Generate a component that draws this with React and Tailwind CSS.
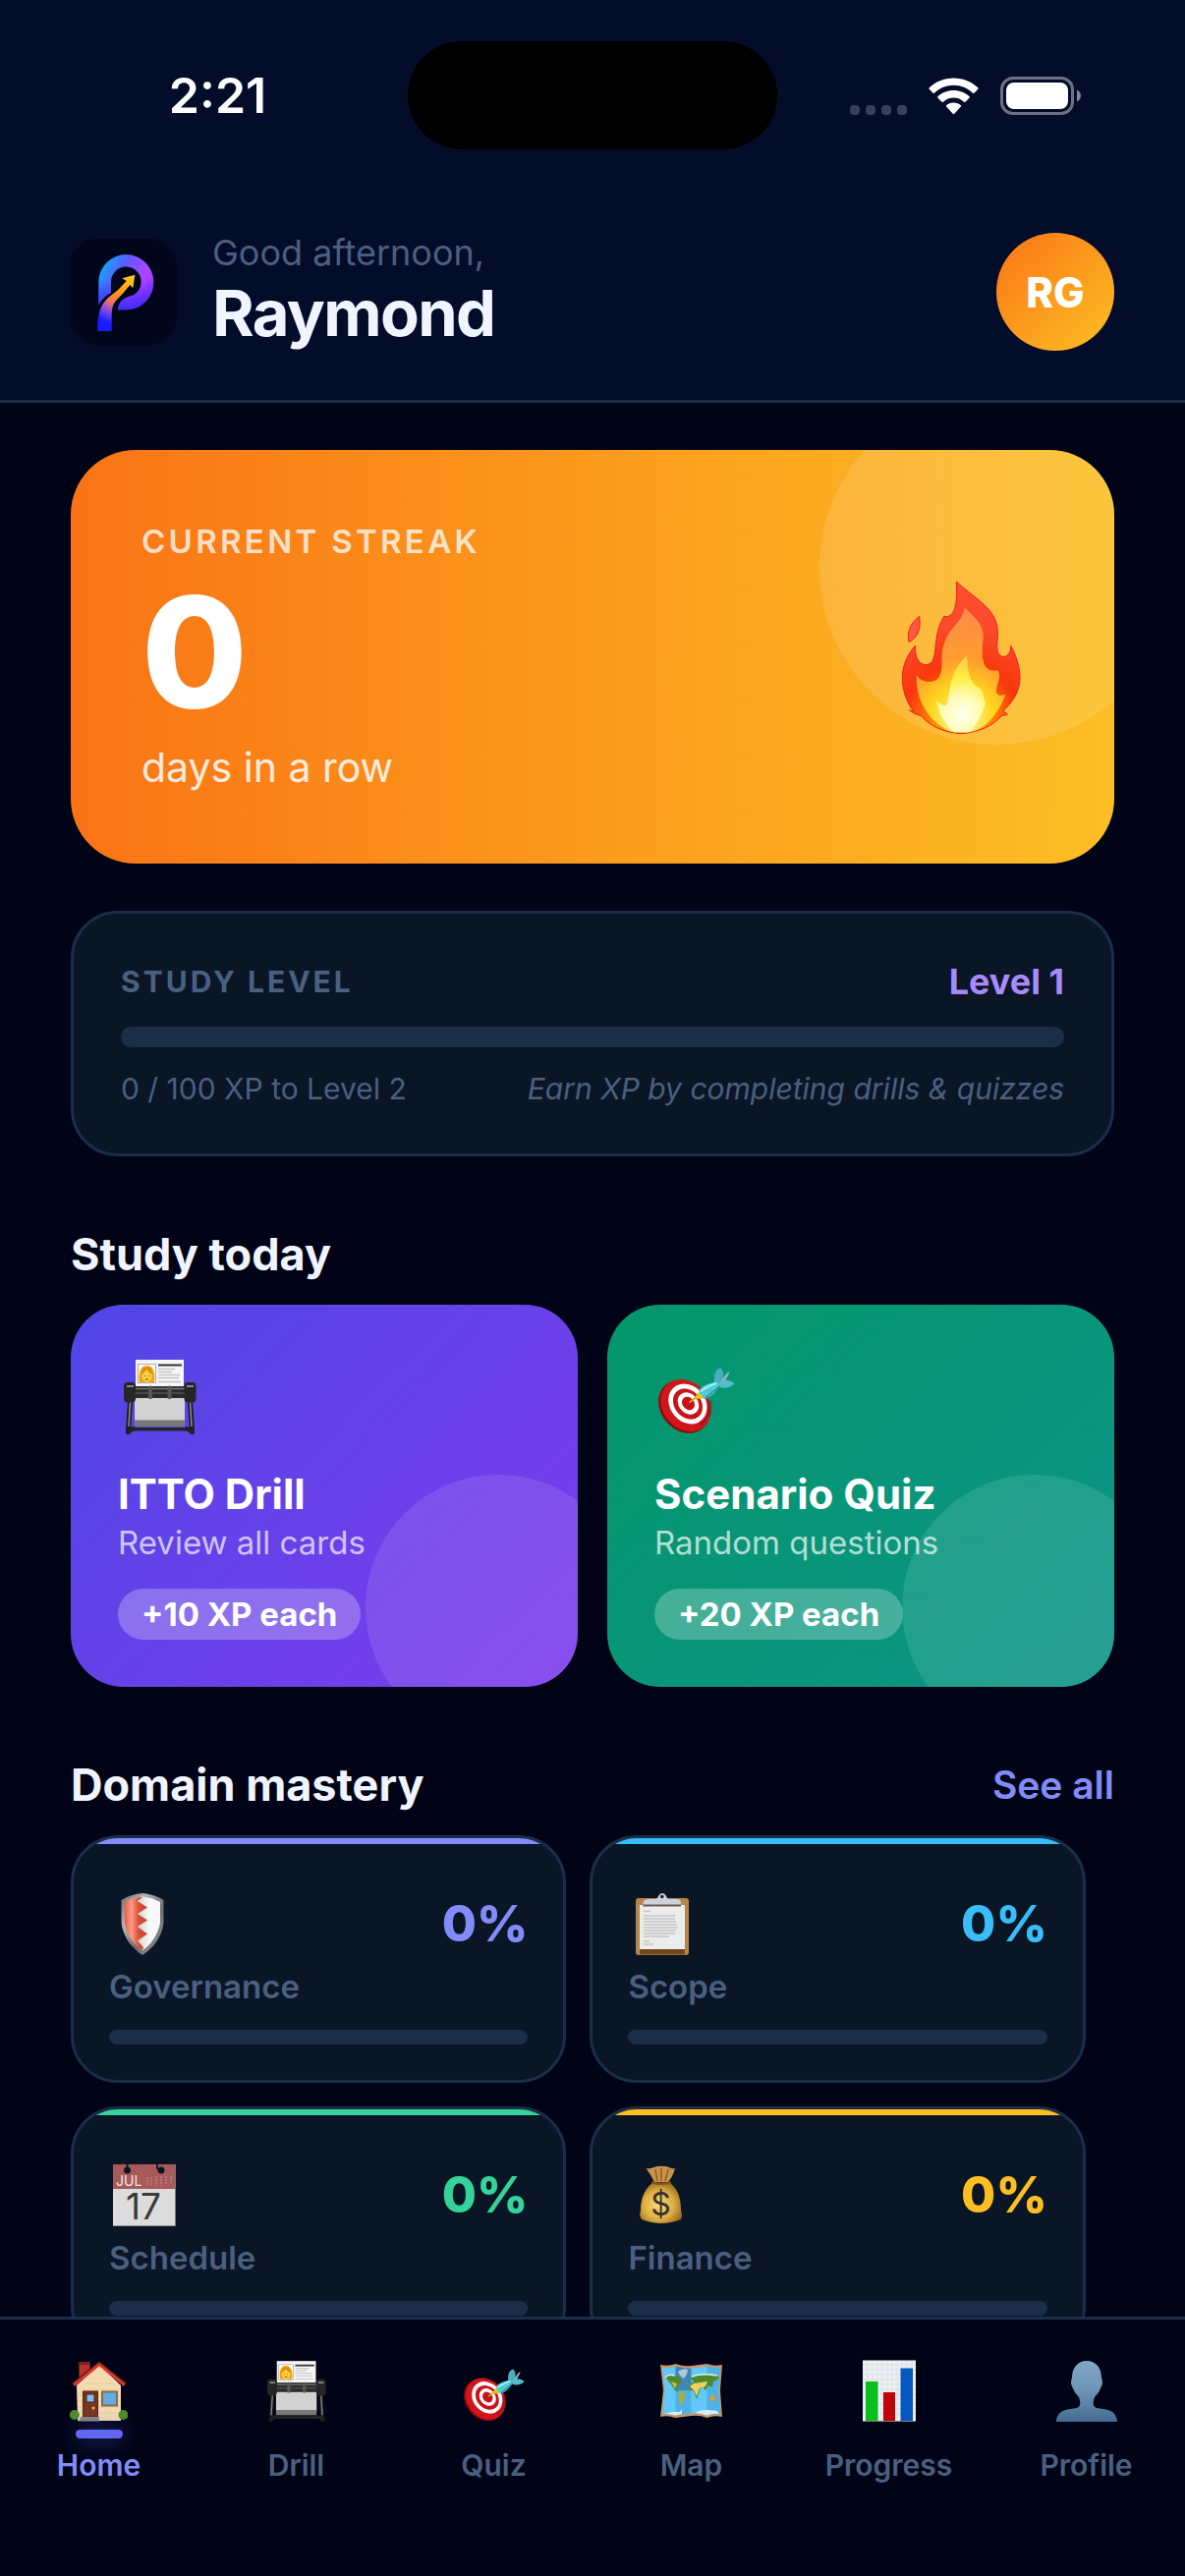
import React, { useState } from 'react';

const WifiIcon = () => (
    <svg width="51" height="38" viewBox="0 0 51 38" fill="#fff" aria-hidden="true">
        <path d="M25.500 .5C35.500 .5 44 4.300 50.300 10.300Q51 11 50.300 11.700L46.400 15.700Q45.800 16.300 45.100 15.700C39.800 10.700 33 7.800 25.500 7.800S11.200 10.700 5.900 15.700Q5.200 16.300 4.600 15.700L.7 11.700Q0 11 .7 10.300C7 4.300 15.500 .5 25.500 .5Z" />
        <path d="M25.500 13C32 13 37.500 15.400 41.600 19.200Q42.300 19.900 41.600 20.600L37.500 24.700Q36.800 25.300 36.100 24.700C33.200 22.200 29.600 20.600 25.500 20.600S17.800 22.200 14.900 24.700Q14.200 25.300 13.500 24.700L9.400 20.600Q8.700 19.900 9.400 19.200C13.500 15.400 19 13 25.500 13Z" />
        <path d="M25.500 25.500C28.400 25.500 31 26.500 32.900 28.200Q33.600 28.900 32.900 29.600L26.300 36.700Q25.500 37.500 24.700 36.700L18.100 29.600Q17.400 28.900 18.100 28.200C20 26.500 22.600 25.500 25.500 25.500Z" />
    </svg>
);

const BatteryIcon = () => (
    <svg width="82" height="39" viewBox="0 0 82 39" aria-hidden="true">
        <rect x="1.500" y="1.500" width="72" height="36" rx="11.500" fill="none" stroke="#fff" strokeOpacity=".42" strokeWidth="3" />
        <rect x="6" y="6" width="63" height="27" rx="8" fill="#fff" />
        <path d="M78 13.500C80.500 14.500 82 17 82 19.500S80.500 24.500 78 25.500Z" fill="#fff" fillOpacity=".5" />
    </svg>
);

const Logo = () => (
    <svg className="size-[108px] shrink-0 rounded-[27px] bg-[#01061a]" viewBox="36 39 324 324" aria-hidden="true">
        <defs>
            <linearGradient id="logoBowl" x1="120" y1="120" x2="285" y2="210" gradientUnits="userSpaceOnUse">
                <stop offset="0" stopColor="#00b8ff" />
                <stop offset=".35" stopColor="#5b5cff" />
                <stop offset=".75" stopColor="#b044ff" />
                <stop offset="1" stopColor="#8a34ff" />
            </linearGradient>
            <linearGradient id="logoFade" x1="0" y1="165" x2="0" y2="256" gradientUnits="userSpaceOnUse">
                <stop offset="0" stopColor="#2a20ff" stopOpacity="0" />
                <stop offset="1" stopColor="#2a20ff" stopOpacity=".8" />
            </linearGradient>
            <linearGradient id="logoArrow" x1="215" y1="160" x2="140" y2="321" gradientUnits="userSpaceOnUse">
                <stop offset="0" stopColor="#ffc21a" />
                <stop offset=".3" stopColor="#ff9a10" />
                <stop offset=".5" stopColor="#f4706a" />
                <stop offset=".68" stopColor="#7a45f0" />
                <stop offset=".85" stopColor="#1a1cff" />
            </linearGradient>
        </defs>
        <path d="M121 242V171A84 84 0 0 1 289 171A84 84 0 0 1 205 256H180Q181 226 212 216A46 46 0 1 0 159 171V204Q134 216 121 242Z" fill="url(#logoBowl)" />
        <path d="M121 242V171A84 84 0 0 1 289 171A84 84 0 0 1 205 256H180Q181 226 212 216A46 46 0 1 0 159 171V204Q134 216 121 242Z" fill="url(#logoFade)" />
        <path d="M118 321C117 268 126 240 154 216Q184 195 206 168L193 160L232 149L226 190L217 180Q196 207 174 228Q161 243 161 270V321Z" fill="url(#logoArrow)" />
    </svg>
);

const FlameIcon = () => (
    <svg width="124" height="158" viewBox="48 30 372 474" aria-hidden="true">
        <defs>
            <radialGradient id="flameOuter" cx="236" cy="470" r="430" gradientUnits="userSpaceOnUse">
                <stop offset="0" stopColor="#ffb400" />
                <stop offset=".2" stopColor="#ff8a00" />
                <stop offset=".42" stopColor="#f8370c" />
                <stop offset=".7" stopColor="#fb4a2c" />
                <stop offset="1" stopColor="#f9502f" />
            </radialGradient>
            <radialGradient id="flameMid" cx="236" cy="460" r="340" gradientUnits="userSpaceOnUse">
                <stop offset="0" stopColor="#fff7a0" />
                <stop offset=".3" stopColor="#ffd51e" />
                <stop offset=".55" stopColor="#ff9d2e" />
                <stop offset="1" stopColor="#ff8a48" />
            </radialGradient>
            <radialGradient id="flameCore" cx="236" cy="445" r="180" gradientUnits="userSpaceOnUse">
                <stop offset="0" stopColor="#fffff0" />
                <stop offset=".35" stopColor="#fffbb0" />
                <stop offset=".65" stopColor="#ffee3c" />
                <stop offset="1" stopColor="#ffc84a" />
            </radialGradient>
        </defs>
        <path d="M107 142C78 164 68 190 75 221C104 205 112 180 107 142Z" fill="#fb5a3c" stroke="#f0242a" strokeWidth="3" />
        <path d="M220 36C268 80 324 110 340 156C354 196 340 222 346 250C354 276 388 268 386 232C402 260 414 296 414 330C414 372 392 402 364 430L376 442L358 446C330 478 286 496 236 500C190 498 144 482 112 446Q88 440 76 428L90 434C68 404 54 366 55 326C56 290 72 256 95 231C92 264 104 288 126 290C172 288 140 212 182 142C212 148 224 116 220 36Z" fill="url(#flameOuter)" stroke="#ee2020" strokeWidth="3" />
        <path d="M245 116C276 142 304 168 302 208C296 262 298 294 322 306C338 310 346 304 348 308C360 332 338 356 342 376C348 386 360 384 370 380C356 424 316 486 260 496H212C160 482 94 420 98 320C112 346 158 352 170 322C184 282 164 262 190 206C206 172 238 158 245 116Z" fill="url(#flameMid)" />
        <path d="M252 262C254 304 258 346 290 360C306 368 300 394 310 406C296 450 276 484 258 496H212C192 480 168 446 158 400C172 406 180 420 188 414C206 388 186 322 252 262Z" fill="url(#flameCore)" />
    </svg>
);

const RolodexIcon = ({ className }) => (
    <svg className={className} viewBox="0 0 74 76" aria-hidden="true">
        <rect x="12" y="0" width="49" height="29" fill="#f6f6f6" />
        <rect x="14.500" y="4.500" width="18" height="19" fill="#fff" stroke="#999" strokeWidth=".8" />
        <path d="M16 23C14.500 13 17 6 23.500 6S32.500 13 31 23Z" fill="#f2a00c" />
        <ellipse cx="23.500" cy="16.500" rx="5.200" ry="6.500" fill="#ffd04a" />
        <path d="M17.800 15C20 14 22 12 23 9.500C24.500 12.500 27 14 29.200 15L27 8H20Z" fill="#e08c00" />
        <path d="M21.300 16.500h.8M25 16.500h.8M22 20h3" stroke="#6b3b00" strokeWidth="1" />
        <path d="M35 5.500H59" stroke="#333" strokeWidth="2.200" />
        <path d="M35 9.500H52M35 12.500H49M35 15.500H57M35 18.500H56M35 22.500H58" stroke="#c4c4c4" strokeWidth="1.300" />
        <path d="M8 69H66V72.500H8Z" fill="#242424" />
        <rect x="11" y="38" width="51" height="25" fill="#d2d2d2" />
        <rect x="11" y="61.500" width="51" height="6.500" fill="#777" />
        <path d="M6.500 42L4.500 73.500M67.500 42L69.500 73.500" stroke="#1c1c1c" strokeWidth="5" strokeLinecap="round" />
        <path d="M6.500 43L5 68M67.500 43L69 68" stroke="#8a8a8a" strokeWidth="1.600" />
        <path d="M4 74L10 70M70 74L64 70" stroke="#222" strokeWidth="4" strokeLinecap="round" />
        <rect x="10" y="27" width="54" height="12" fill="#2b2b2b" />
        <path d="M12 29.500H62" stroke="#777" strokeWidth="1.500" />
        <path d="M12 34H62" stroke="#484848" strokeWidth="2" />
        <rect x="25" y="26.500" width="4" height="13.500" rx="1.500" fill="#565656" />
        <rect x="44.500" y="26.500" width="4" height="13.500" rx="1.500" fill="#565656" />
        <rect x="0" y="23" width="12" height="20.500" rx="4" fill="#262626" />
        <rect x="61.500" y="23" width="12" height="20.500" rx="4" fill="#262626" />
        <path d="M3 27H10M64 27H71" stroke="#858585" strokeWidth="2" />
    </svg>
);

const TargetIcon = ({ className }) => (
    <svg className={className} viewBox="0 0 78 68" aria-hidden="true">
        <ellipse cx="26" cy="40" rx="29" ry="23.500" transform="rotate(50 26 40)" fill="#8e0a0e" />
        <ellipse cx="28" cy="38.500" rx="28.500" ry="23.500" transform="rotate(50 28 38.500)" fill="#d0161b" />
        <ellipse cx="30" cy="37" rx="22" ry="18" transform="rotate(50 30 37)" fill="#fff" />
        <ellipse cx="30" cy="37" rx="17" ry="13.500" transform="rotate(50 30 37)" fill="#c8151b" />
        <ellipse cx="30.500" cy="36.500" rx="12" ry="9.800" transform="rotate(50 30.500 36.500)" fill="#fff" />
        <ellipse cx="30.500" cy="36.500" rx="7.300" ry="6" transform="rotate(50 30.500 36.500)" fill="#c4141a" />
        <path d="M52 34C53 44 49 54 42 57" stroke="#7d0a0e" strokeOpacity=".35" strokeWidth="5" fill="none" />
        <path d="M31.500 35.500L41 28.500" stroke="#d9a400" strokeWidth="1.800" />
        <path d="M37.500 30L41 25L46 31.500L40 32Z" fill="#f2c200" />
        <path d="M60 17L71 4.500L72.500 5L66 17Z" fill="#8fb5bd" />
        <path d="M57 15C56 8 58 1 63.500 .5C67.500 5 67 12 61 17Z" fill="#48aebd" />
        <path d="M60 17C66 11 72 12 77.500 16C74 21 66 22 59 19Z" fill="#55bccb" />
        <path d="M41 25C42 20 48 17 59 14.500L63 18C58 26 52 31 46.500 32Z" fill="#4ecbd6" />
        <path d="M43 24.500C48 20 53 18 59 16" stroke="#a8f0f2" strokeWidth="2" fill="none" />
        <path d="M48 31L63 18.500" stroke="#2a8c99" strokeWidth="1.500" />
    </svg>
);

const ShieldIcon = () => (
    <svg width="44" height="63" viewBox="0 0 44 63" aria-hidden="true">
        <defs>
            <linearGradient id="shieldRim" x1="0" y1="0" x2="1" y2="1">
                <stop offset="0" stopColor="#6b6b6b" />
                <stop offset=".3" stopColor="#b5b5b5" />
                <stop offset=".6" stopColor="#6d6d6d" />
                <stop offset="1" stopColor="#9a9a9a" />
            </linearGradient>
            <linearGradient id="shieldRight" x1="0" y1="0" x2="1" y2="0">
                <stop offset="0" stopColor="#aab0b4" />
                <stop offset=".7" stopColor="#f7f8fa" />
            </linearGradient>
            <linearGradient id="shieldLeft" x1="0" y1="0" x2="1" y2="0">
                <stop offset="0" stopColor="#ee5c48" />
                <stop offset=".3" stopColor="#ff9a86" />
                <stop offset=".6" stopColor="#dd5238" />
                <stop offset="1" stopColor="#b9432b" />
            </linearGradient>
        </defs>
        <path d="M22 0C29 .5 37 3 43.500 7V30C42 44 33 56 22 63C11 56 2 44 .5 30V7C7 3 15 .5 22 0Z" fill="url(#shieldRim)" />
        <path d="M22 3.500C28 4 34 6 40 9V30C38 42 31 52 22 58.500C13 52 6 42 4 30V9C10 6 16 4 22 3.500Z" fill="url(#shieldRight)" />
        <path d="M22 4L17 8L27 14.500L17 21L27 27.500L17 34L27 41.500L17 48.500L23 55L22 58.500C13 52 6 42 4 30V9C10 6 16 4 22 4Z" fill="url(#shieldLeft)" />
    </svg>
);

const ClipboardIcon = () => (
    <svg width="54" height="63" viewBox="0 0 54 63" aria-hidden="true">
        <rect x="0" y="5" width="54" height="58" rx="3" fill="#b5854a" />
        <rect x="4" y="56" width="46" height="6.500" fill="#72491c" />
        <rect x="4" y="12" width="46" height="45" fill="#ececec" />
        <path d="M8 18.500H15M8 23H40M8 26H40M8 29H41M8 32H42M8 35H43M8 38H41M8 41H40M8 44H34M8 49H14M8 52H18" stroke="#c4c4c4" strokeWidth="1.300" />
        <path d="M7.500 13V10Q8 6.500 12 6H20Q22.500 5.500 23 3Q24.500 0 27 0T31 3Q31.500 5.500 34 6H42Q46 6.500 46 10V13Z" fill="#ccd2d8" />
        <path d="M7.500 12.500H46" stroke="#6d5a55" strokeWidth="2" />
        <circle cx="26.800" cy="3.500" r="1.700" fill="#1a1a1a" />
    </svg>
);

const CalendarIcon = () => (
    <svg className="overflow-visible" width="64" height="63" viewBox="0 0 64 63" aria-hidden="true">
        <rect x="0" y="0" width="63.500" height="63" fill="#dcdcdc" />
        <rect x="0" y="0" width="63.500" height="25" fill="#a85a5a" />
        <path d="M35 13V21M39 13V22M44 12V22M49 12V22M54 12V20M59 12V19" stroke="#c07f7f" strokeWidth="1.500" strokeDasharray="2 1" />
        <path d="M14.500 0V6M45 0V4L49 6" stroke="#0a1525" strokeWidth="1.800" fill="none" />
        <circle cx="14.500" cy="6" r="3.500" fill="#0a1525" />
        <circle cx="49" cy="6" r="3.500" fill="#0a1525" />
        <text x="3" y="22" fontSize="14" fontFamily="Inter, sans-serif" fill="#f3e4e4">JUL</text>
        <text x="31" y="56" fontSize="37" textAnchor="middle" fontFamily="Inter, sans-serif" fill="#3a3a3a">17</text>
        <rect x="0" y="62" width="63.500" height="1" fill="#999" />
    </svg>
);

const MoneyBagIcon = () => (
    <svg className="overflow-visible" width="44" height="58" viewBox="0 0 44 58" aria-hidden="true">
        <defs>
            <radialGradient id="bagBody" cx=".45" cy=".55" r=".6">
                <stop offset="0" stopColor="#f7dc7c" />
                <stop offset=".6" stopColor="#dcae42" />
                <stop offset="1" stopColor="#9a6a1a" />
            </radialGradient>
        </defs>
        <path d="M6.500 2Q11 3 14 1Q21 -1 29 0.500Q32 3 36 2Q34 10 29 16H15Q11 8 6.500 2Z" fill="#c8934a" />
        <path d="M16 3L18 15M22 2V15M29 3L26 15" stroke="#8d5c20" strokeWidth="1.500" />
        <path d="M13 17H31C40 24 42 34 42 45Q44 50 42 54Q32 58 22 58T2 54Q-1 50 1 45C1 34 4 24 13 17Z" fill="url(#bagBody)" />
        <path d="M12 16.500Q22 19 32 16.500" stroke="#8a5418" strokeWidth="2.500" fill="none" />
        <text x="21.500" y="50" fontSize="32" textAnchor="middle" fontFamily="Inter, sans-serif" fill="#3b302a">$</text>
    </svg>
);

const HouseIcon = ({ className }) => (
    <svg className={className} viewBox="0 0 59 61" aria-hidden="true">
        <rect x="9.500" y="0" width="11" height="17" fill="#b5342c" />
        <rect x="9.500" y="0" width="11" height="3" fill="#7c211d" />
        <path d="M7 24L30 3L52 24V60H8Z" fill="#f4dcb0" />
        <path d="M8 46H52M8 52H52M8 40H52M8 34H52M10 28H50M14 22H46" stroke="#e6c996" strokeWidth=".8" />
        <path d="M3 22L30 0L57 22L55 25L30 4.500L5 25Z" fill="#d9372c" />
        <path d="M3 21.500L30 0L57 21.500" stroke="#4a1614" strokeWidth="1.200" fill="none" />
        <rect x="13.500" y="30" width="15" height="26" fill="#7b3520" stroke="#4f1f12" strokeWidth="1" />
        <rect x="17" y="33" width="8" height="8" fill="#7cc0ee" stroke="#52200f" strokeWidth="1" />
        <circle cx="24" cy="47" r="1.500" fill="#f2c02c" />
        <rect x="33" y="30.500" width="15" height="14" fill="#62ade4" stroke="#8a6a48" strokeWidth="2" />
        <path d="M11 56H30V60.500H9Z" fill="#8b8682" />
        <circle cx="4.800" cy="54" r="5" fill="#4e8a28" />
        <circle cx="54.500" cy="54" r="5" fill="#4e8a28" />
    </svg>
);

const MapIcon = ({ className }) => (
    <svg className={className} viewBox="0 0 63 55" aria-hidden="true">
        <path d="M0 1Q8 3 15.500 0Q24 3 31.500 2T47.500 0Q55 3 63 1L61 27L63 54Q55 52 47.500 55Q40 52 31.500 53T15.500 55Q8 52 0 54L3 27Z" fill="#c99468" />
        <path d="M2 3.500Q9 5 15.500 2.500Q24 5 31.500 4.500T47.500 2.500Q55 5 61 3.500L59.500 27L61 51.500Q54 50 47.500 52.500Q40 50 31.500 50.500T15.500 52.500Q9 50 2 51.500L4.500 27Z" fill="#62c8f7" />
        <path d="M15.500 2.500Q24 5 31.500 4.500V27H15.500Z" fill="#3f86b4" />
        <path d="M15.500 27H31.500V50.500Q24 50.500 15.500 52.500ZM47.500 2.500Q54 4.500 61 3.500L59.500 27L61 51.500Q54 50 47.500 52.500Z" fill="#4fb2e6" />
        <path d="M5 13Q7 9 12 12L20 14L22 18L18 21L16 25L19 29L15 27L11 21L7 16Z" fill="#4f8a2a" />
        <path d="M11 18L17 20L15 25Z" fill="#d2bd3e" />
        <path d="M18 8Q23 4 28 6Q27 12 24 15Q20 13 18 8Z" fill="#b4c8d4" />
        <path d="M19 28Q24 28 25.500 32Q24 37 21 43Q19 38 19 28Z" fill="#b2b034" />
        <path d="M31 15Q34 10 40 12Q47 9 58 12L60 15L54 18L53 24L49 22L46 27L43 23L40 27L37 36L34 28L29 26L31 20L34 18Z" fill="#4f8a2a" />
        <path d="M30 23L34 20L48 18L46 23L40 25L37 33L34 27Z" fill="#ecd060" />
        <path d="M50 34L55 32L56 37L51 38Z" fill="#f09a28" />
        <path d="M5 14Q8 10 14 12M32 13Q42 9 58 12" stroke="#e8eef0" strokeWidth="1.500" fill="none" />
        <path d="M4 51Q14 48 20 49L22 46V51L15.500 52.500Q9 50.500 4 51ZM35 50Q42 45 58 48L60 51Q54 50 47.500 52.500Q40 50 35 50Z" fill="#dceef5" />
    </svg>
);

const ChartIcon = ({ className }) => (
    <svg className={className} viewBox="0 0 54 63" aria-hidden="true">
        <rect x="0" y="0" width="54" height="63" fill="#eef0f2" />
        <path d="M0 5H54M0 10H54M0 15H54M0 20H54M0 25H54M0 30H54M0 35H54M0 40H54M0 45H54M0 50H54M0 55H54M5 0V63M10 0V63M15 0V63M20 0V63M25 0V63M30 0V63M35 0V63M40 0V63M45 0V63M50 0V63" stroke="#cfdbe5" strokeWidth=".7" />
        <rect x="3" y="22" width="12.500" height="41" fill="#0abf1c" />
        <rect x="21" y="33" width="12" height="30" fill="#c00508" />
        <rect x="38.500" y="8.500" width="12.500" height="54.500" fill="#0558c0" />
        <path d="M0 .5H54M0 62.500H54" stroke="#7d7d85" strokeWidth="1" />
    </svg>
);

const PersonIcon = ({ className }) => (
    <svg className={className} viewBox="0 0 62 62" aria-hidden="true">
        <defs>
            <linearGradient id="personFill" x1="0" y1="0" x2="0" y2="1">
                <stop offset="0" stopColor="#82a8c6" />
                <stop offset=".5" stopColor="#6d93b6" />
                <stop offset="1" stopColor="#466b92" />
            </linearGradient>
        </defs>
        <path d="M31 0C40 0 46 7 46 17Q48 22 46 26Q44 32 39 37C37 43 37 46 41 48C49 50 61 48 62 62H0C1 48 13 50 21 48C25 46 25 43 23 37Q18 32 16 26Q14 22 16 17C16 7 22 0 31 0Z" fill="url(#personFill)" />
    </svg>
);

const domains = [
    { name: 'Governance', percent: 0, Icon: ShieldIcon, text: 'text-[#818cf8]', bg: 'bg-[#818cf8]', pad: 'pl-3' },
    { name: 'Scope', percent: 0, Icon: ClipboardIcon, text: 'text-[#38bdf8]', bg: 'bg-[#38bdf8]', pad: 'pl-2' },
    { name: 'Schedule', percent: 0, Icon: CalendarIcon, text: 'text-[#34d399]', bg: 'bg-[#34d399]', pad: 'pl-1' },
    { name: 'Finance', percent: 0, Icon: MoneyBagIcon, text: 'text-[#fbbf24]', bg: 'bg-[#fbbf24]', pad: 'pl-3' },
];

const studyCards = [
    {
        title: 'ITTO Drill',
        subtitle: 'Review all cards',
        xp: '+10 XP each',
        gradient: 'bg-linear-135 from-[#4f46e5] to-[#7c3aed]',
        icon: <RolodexIcon className="ml-1.5 h-[76px] w-[74px]" />,
    },
    {
        title: 'Scenario Quiz',
        subtitle: 'Random questions',
        xp: '+20 XP each',
        gradient: 'bg-linear-135 from-[#059669] to-[#0d9488]',
        icon: <TargetIcon className="ml-1 h-[68px] w-[78px]" />,
    },
];

const tabs = [
    { name: 'Home', icon: <HouseIcon className="h-[61px] w-[59px]" /> },
    { name: 'Drill', icon: <RolodexIcon className="h-[62px] w-[60px]" /> },
    { name: 'Quiz', icon: <TargetIcon className="h-[54px] w-[62px]" /> },
    { name: 'Map', icon: <MapIcon className="mb-1 h-[55px] w-[63px]" /> },
    { name: 'Progress', icon: <ChartIcon className="h-[63px] w-[54px]" /> },
    { name: 'Profile', icon: <PersonIcon className="h-[62px] w-[62px]" /> },
];

const StatusBar = () => (
    <div className="grid h-[186px] grid-cols-[1fr_376px_1fr] pt-[42px] pb-[34px]">
        <div className="flex items-center justify-center pl-7 text-[50px] font-semibold text-white">2:21</div>
        <div className="rounded-full bg-black" />
        <div className="flex items-center justify-center pr-8">
            <div className="flex items-end">
                <div className="mr-[22px] flex gap-[6px]">
                    <span className="size-[10px] rounded-[4px] bg-white/22" />
                    <span className="size-[10px] rounded-[4px] bg-white/22" />
                    <span className="size-[10px] rounded-[4px] bg-white/22" />
                    <span className="size-[10px] rounded-[4px] bg-white/22" />
                </div>
                <div className="mr-[22px]">
                    <WifiIcon />
                </div>
                <BatteryIcon />
            </div>
        </div>
    </div>
);

const ProgressBar = ({ label, value, track, fill }) => (
    <div
        role="progressbar"
        aria-label={label}
        aria-valuenow={value}
        aria-valuemin={0}
        aria-valuemax={100}
        className={`overflow-hidden rounded-full bg-[#1a2e4a] ${track}`}
    >
        <div className={`h-full rounded-full ${fill}`} style={{ width: `${value}%` }} />
    </div>
);

const StudyCard = ({ card }) => (
    <button className={`relative flex flex-1 flex-col items-start overflow-hidden rounded-[54px] p-12 text-left ${card.gradient}`}>
        <span className="absolute -right-[54px] -bottom-[54px] size-[270px] rounded-full bg-white/10" />
        <span className="flex h-[84px] items-end">{card.icon}</span>
        <span className="relative mt-[34px] text-[42px] leading-[54px] font-bold text-white">{card.title}</span>
        <span className="relative text-[33px] leading-[45px] text-white/70">{card.subtitle}</span>
        <span className="relative mt-6 rounded-full bg-white/25 px-6 text-[33px] leading-[52px] font-bold text-white">
            {card.xp}
        </span>
    </button>
);

const DomainCard = ({ domain }) => {
    const { name, percent, Icon, text, bg, pad } = domain;

    return (
        <div className="relative overflow-hidden rounded-[48px] border-3 border-[#1a2e4a] bg-[#0a1525] px-9 pt-[45px] pb-9">
            <div className={`absolute inset-x-0 top-0 h-[6px] ${bg}`} />
            <div className="flex h-[84px] items-center justify-between">
                <div className={pad}>
                    <Icon />
                </div>
                <span className={`text-[51px] font-extrabold ${text}`}>{percent}%</span>
            </div>
            <p className="mb-[22px] text-[33px] leading-[44px] font-semibold text-[#4a6080]">{name}</p>
            <ProgressBar label={`${name} mastery`} value={percent} track="h-[15px]" fill={bg} />
        </div>
    );
};

const App = () => {
    const [activeTab, setActiveTab] = useState('Home');

    return (
        <div className="flex h-screen flex-col bg-[#000416] font-['Inter',sans-serif]">
            <header className="shrink-0 border-b-3 border-[#1e2d4a] bg-[#030c28]">
                <StatusBar />
                <div className="flex items-center px-[72px] pt-[49px] pb-12">
                    <Logo />
                    <div className="ml-9 flex-1">
                        <p className="text-[36px] leading-[44px] text-[#4a6080]">Good afternoon,</p>
                        <h1 className="text-[65px] leading-[80px] font-bold tracking-tight text-[#f0f4ff]">Raymond</h1>
                    </div>
                    <button className="size-[120px] rounded-full bg-linear-135 from-[#f97316] to-[#fbbf24] text-[42px] font-extrabold text-white">
                        RG
                    </button>
                </div>
            </header>

            <main className="min-h-0 flex-1 overflow-y-auto px-[72px] py-12 [scrollbar-width:none]">
                <section className="relative overflow-hidden rounded-[66px] bg-linear-to-r from-[#f97316] to-[#fbbf24] p-[72px]">
                    <div className="absolute -top-[60px] -right-[60px] size-[360px] rounded-full bg-white/12" />
                    <p className="text-[33px] leading-[42px] font-semibold tracking-widest text-white/75">CURRENT STREAK</p>
                    <p className="my-[14px] text-[156px] leading-[156px] font-extrabold text-white">0</p>
                    <p className="text-[41px] leading-[51px] text-white/85">days in a row</p>
                    <div className="absolute inset-y-0 right-[94px] flex items-center">
                        <FlameIcon />
                    </div>
                </section>

                <section className="mt-12 rounded-[48px] border-3 border-[#1a2e4a] bg-[#0a1525] p-12">
                    <div className="flex items-center justify-between leading-[43px]">
                        <h2 className="text-[30px] font-bold tracking-widest text-[#4a6080]">STUDY LEVEL</h2>
                        <span className="text-[36px] font-bold text-[#a78bfa]">Level 1</span>
                    </div>
                    <div className="my-6">
                        <ProgressBar label="Study level" value={0} track="h-[21px]" fill="bg-[#a78bfa]" />
                    </div>
                    <div className="flex items-center justify-between text-[30px] leading-[36px] text-[#4a6080]">
                        <span>0 / 100 XP to Level 2</span>
                        <span className="italic">Earn XP by completing drills &amp; quizzes</span>
                    </div>
                </section>

                <section className="mt-[72px]">
                    <h2 className="mb-6 text-[45px] leading-[55px] font-bold text-[#f0f4ff]">Study today</h2>
                    <div className="flex gap-[30px]">
                        {studyCards.map((card) => (
                            <StudyCard key={card.title} card={card} />
                        ))}
                    </div>
                </section>

                <section className="mt-[72px]">
                    <div className="mb-6 flex items-center justify-between leading-[55px]">
                        <h2 className="text-[45px] font-bold text-[#f0f4ff]">Domain mastery</h2>
                        <button className="text-[39px] font-semibold text-[#818cf8]">See all</button>
                    </div>
                    <div className="grid grid-cols-[47.5%_47.5%] gap-6">
                        {domains.map((domain) => (
                            <DomainCard key={domain.name} domain={domain} />
                        ))}
                    </div>
                </section>
            </main>

            <nav className="grid shrink-0 grid-cols-6 border-t-3 border-[#1a2e4a] bg-[#000416] pt-9 pb-[91px]">
                {tabs.map((tab) => (
                    <button
                        key={tab.name}
                        onClick={() => setActiveTab(tab.name)}
                        className={`flex flex-col items-center text-[30px] leading-[44px] font-semibold ${activeTab === tab.name ? 'text-[#818cf8]' : 'text-[#4a6080]'}`}
                    >
                        <span className="flex h-[68px] items-end">{tab.icon}</span>
                        <span className="flex h-[22px] items-end pb-px">
                            {activeTab === tab.name && (
                                <span className="mb-1 h-[9px] w-12 rounded-full bg-[#6366f1] shadow-[0_0_24px_#6366f199]" />
                            )}
                        </span>
                        {tab.name}
                    </button>
                ))}
            </nav>
        </div>
    );
};

export default App;
